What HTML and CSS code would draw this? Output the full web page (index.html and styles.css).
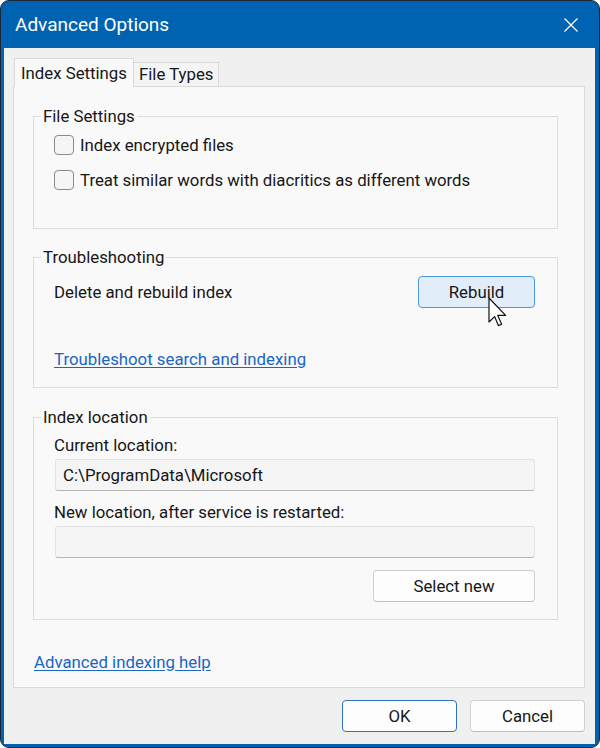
FILE: index.html
```html
<!DOCTYPE html>
<html>
<head>
<meta charset="utf-8">
<title>Advanced Options</title>
<link rel="stylesheet" href="styles.css">
</head>
<body>
<div class="window">
  <div class="titlebar">
    <span class="title">Advanced Options</span>
    <svg class="close" width="16" height="16" viewBox="0 0 16 16"><path d="M1.5 1.5L14.5 14.5M14.5 1.5L1.5 14.5" stroke="#ffffff" stroke-width="1.3" fill="none"/></svg>
  </div>
  <div class="client">
    <div class="tabs">
      <div class="tab active">Index Settings</div>
      <div class="tab">File Types</div>
    </div>
    <div class="panel">
      <fieldset class="group group-file">
        <legend>File Settings</legend>
        <label class="check"><span class="box"></span>Index encrypted files</label>
        <label class="check check-second"><span class="box"></span>Treat similar words with diacritics as different words</label>
      </fieldset>

      <fieldset class="group group-trouble">
        <legend>Troubleshooting</legend>
        <div class="rebuild-row">
          <span>Delete and rebuild index</span>
          <div class="btn-wrap">
            <button class="btn btn-hover">Rebuild</button>
            <svg class="cursor" width="22" height="32" viewBox="0 0 22 32"><path d="M1 1 L1 25 L6.6 19.6 L10.4 28.6 L13.6 27.2 L9.8 18.4 L17.6 18.4 Z" fill="#ffffff" stroke="#111111" stroke-width="1.2" stroke-linejoin="round"/></svg>
          </div>
        </div>
        <a class="link link-trouble" href="#">Troubleshoot search and indexing</a>
      </fieldset>

      <fieldset class="group group-location">
        <legend>Index location</legend>
        <div class="field-label">Current location:</div>
        <div class="field">C:\ProgramData\Microsoft</div>
        <div class="field-label field-label-second">New location, after service is restarted:</div>
        <div class="field"></div>
        <div class="select-row">
          <button class="btn btn-select">Select new</button>
        </div>
      </fieldset>

      <a class="link link-help" href="#">Advanced indexing help</a>
    </div>
    <div class="footer">
      <button class="btn btn-dialog btn-default">OK</button>
      <button class="btn btn-dialog">Cancel</button>
    </div>
  </div>
</div>
</body>
</html>
```
FILE: styles.css
```css
html, body {
  margin: 0;
  padding: 0;
  background: #ffffff;
}

body {
  font-family: Roboto, "Noto Sans", sans-serif;
  font-size: 16.8px;
  color: #161616;
}

.window {
  width: 600px;
  height: 748px;
  box-sizing: border-box;
  border: 1px solid #1c2636;
  border-radius: 9px;
  background: #0063b1;
  padding: 0 4px 3px 3px;
  display: flex;
  flex-direction: column;
  overflow: hidden;
}

.titlebar {
  height: 47px;
  flex: none;
  display: flex;
  align-items: center;
  justify-content: space-between;
  padding: 0 16px 0 11px;
}

.title {
  color: #ffffff;
  font-size: 19px;
}

.close {
  display: block;
}

.client {
  flex: 1;
  background: #f0f0f0;
  padding: 10px 10px 11px 9px;
  display: flex;
  flex-direction: column;
}

.tabs {
  display: flex;
  align-items: flex-end;
  height: 28px;
  padding-left: 1px;
}

.tab {
  box-sizing: border-box;
  height: 24px;
  line-height: 22px;
  padding: 0 5px 0 5px;
  border: 1px solid #dadada;
  border-bottom: none;
  border-left: none;
  background: #f4f4f4;
}

.tab.active {
  height: 29px;
  line-height: 28px;
  margin-bottom: -1px;
  padding: 0 6px 0 6px;
  border-left: 1px solid #dadada;
  background: #f9f9f9;
  position: relative;
  z-index: 1;
}

.panel {
  background: #f9f9f9;
  border: 1px solid #dadada;
  padding: 0 26px 15px 19px;
  display: flex;
  flex-direction: column;
  align-items: flex-start;
}

.group {
  width: 525px;
  box-sizing: border-box;
  margin: 0;
  border: 1px solid #dcdcdc;
  padding: 0 22px 0 20px;
  min-width: 0;
  display: flex;
  flex-direction: column;
  align-items: flex-start;
}

.group legend {
  padding: 0 2px;
  margin-left: -13px;
  line-height: 20px;
}

.group-file {
  margin-top: 19px;
  padding-top: 9px;
  padding-bottom: 38px;
}

.check {
  display: flex;
  align-items: center;
  gap: 6px;
  height: 20px;
  line-height: 20px;
}

.check-second {
  margin-top: 15px;
}

.box {
  width: 20px;
  height: 20px;
  box-sizing: border-box;
  border: 1px solid #8b8b8b;
  border-radius: 4px;
  background: #f5f5f5;
}

.group-trouble {
  margin-top: 18px;
  padding-top: 9px;
  padding-bottom: 18px;
}

.rebuild-row {
  align-self: stretch;
  display: flex;
  align-items: center;
  justify-content: space-between;
  height: 32px;
}

.btn-wrap {
  position: relative;
}

.btn {
  font-family: Roboto, "Noto Sans", sans-serif;
  font-size: 16.8px;
  color: #161616;
  box-sizing: border-box;
  height: 32px;
  border: 1px solid #d0d0d0;
  border-bottom-color: #bdbdbd;
  border-radius: 4px;
  background: #fdfdfd;
  padding: 0;
  display: block;
}

.btn-hover {
  width: 117px;
  background: #e1eefa;
  border: 1px solid #4b98de;
}

.cursor {
  position: absolute;
  left: 70px;
  top: 21px;
}

.link {
  color: #1a66c4;
  text-decoration: underline;
  text-underline-offset: 2px;
  line-height: 20px;
}

.link-trouble {
  margin-top: 41px;
}

.group-location {
  margin-top: 19px;
  padding-top: 8px;
  padding-bottom: 17px;
}

.field-label {
  line-height: 20px;
}

.field-label-second {
  margin-top: 11px;
}

.field {
  align-self: stretch;
  box-sizing: border-box;
  height: 32px;
  margin-top: 4px;
  margin-left: 1px;
  background: #f5f5f5;
  border: 1px solid #e2e2e2;
  border-bottom-color: #b5b5b5;
  border-radius: 3px;
  line-height: 30px;
  padding: 0 7px;
}

.select-row {
  align-self: stretch;
  display: flex;
  justify-content: flex-end;
  margin-top: 12px;
}

.btn-select {
  width: 162px;
}

.link-help {
  margin-top: 32px;
  margin-left: 1px;
}

.footer {
  display: flex;
  justify-content: flex-end;
  gap: 13px;
  margin-top: 12px;
}

.btn-dialog {
  width: 115px;
}

.btn-default {
  border: 1px solid #2d73c0;
}
```
